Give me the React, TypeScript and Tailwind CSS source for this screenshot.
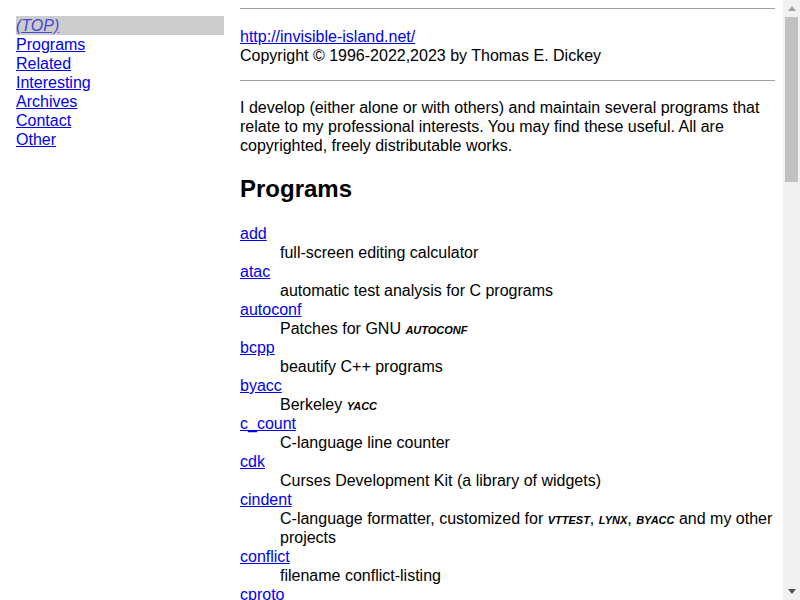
const nav = ["(TOP)", "Programs", "Related", "Interesting", "Archives", "Contact", "Other"];

type Item = { name: string; desc: React.ReactNode };

const Sc = ({ children }: { children: string }) => (
  <span className="text-[11px] leading-none font-bold italic uppercase">{children}</span>
);

const programs: Item[] = [
  { name: "add", desc: "full-screen editing calculator" },
  { name: "atac", desc: "automatic test analysis for C programs" },
  { name: "autoconf", desc: <>Patches for GNU <Sc>autoconf</Sc></> },
  { name: "bcpp", desc: "beautify C++ programs" },
  { name: "byacc", desc: <>Berkeley <Sc>yacc</Sc></> },
  { name: "c_count", desc: "C-language line counter" },
  { name: "cdk", desc: "Curses Development Kit (a library of widgets)" },
  {
    name: "cindent",
    desc: (
      <>
        C-language formatter, customized for <Sc>vttest</Sc>, <Sc>lynx</Sc>, <Sc>byacc</Sc> and my other projects
      </>
    ),
  },
  { name: "conflict", desc: "filename conflict-listing" },
  { name: "cproto", desc: "generate C function prototypes from source" },
  { name: "ded", desc: "directory editor" },
  { name: "dialog", desc: "script-driven curses widgets" },
];

export default function App() {
  return (
    <div className="flex h-screen overflow-hidden bg-white font-['Liberation_Sans',Arial,sans-serif] text-[16px] leading-[19px] text-black">
      <div className="flex min-w-0 flex-1 p-2">
        <div className="ml-2 mt-2 w-[208px] shrink-0">
          {nav.map((n, i) => (
            <div key={n} className={i === 0 ? "bg-[#cccccc]" : ""}>
              <a href="#" className={i === 0 ? "italic text-[#4646d6] underline" : "text-[#0000ee] underline"}>
                {n}
              </a>
            </div>
          ))}
        </div>
        <div className="ml-4 min-w-0 flex-1">
          <hr className="border-t border-[#a0a0a0]" />
          <div className="mt-[18px]">
            <a href="#" className="text-[#0000ee] underline">
              http://invisible-island.net/
            </a>
          </div>
          <div>Copyright © 1996-2022,2023 by Thomas E. Dickey</div>
          <hr className="mt-[15px] border-t border-[#a0a0a0]" />
          <p className="mt-[17px]">
            I develop (either alone or with others) and maintain several programs that relate to my professional
            interests. You may find these useful. All are copyrighted, freely distributable works.
          </p>
          <h2 className="mt-[20px] text-[24px] font-bold leading-[28px]">Programs</h2>
          <dl className="mt-[21px]">
            {programs.map((p) => (
              <div key={p.name}>
                <dt>
                  <a href="#" className="text-[#0000ee] underline">
                    {p.name}
                  </a>
                </dt>
                <dd className="ml-10">{p.desc}</dd>
              </div>
            ))}
          </dl>
        </div>
      </div>
      <div className="flex w-[17px] shrink-0 flex-col items-center bg-[#f1f1f1]">
        <div className="flex h-[17px] items-center justify-center">
          <svg width="8" height="5" viewBox="0 0 8 5">
            <path d="M0 5 L4 0 L8 5 Z" fill="#a3a3a3" />
          </svg>
        </div>
        <div className="h-[165px] w-[13px] bg-[#c1c1c1]" />
        <div className="flex-1" />
        <div className="flex h-[17px] items-center justify-center">
          <svg width="8" height="5" viewBox="0 0 8 5">
            <path d="M0 0 L4 5 L8 0 Z" fill="#505050" />
          </svg>
        </div>
      </div>
    </div>
  );
}
